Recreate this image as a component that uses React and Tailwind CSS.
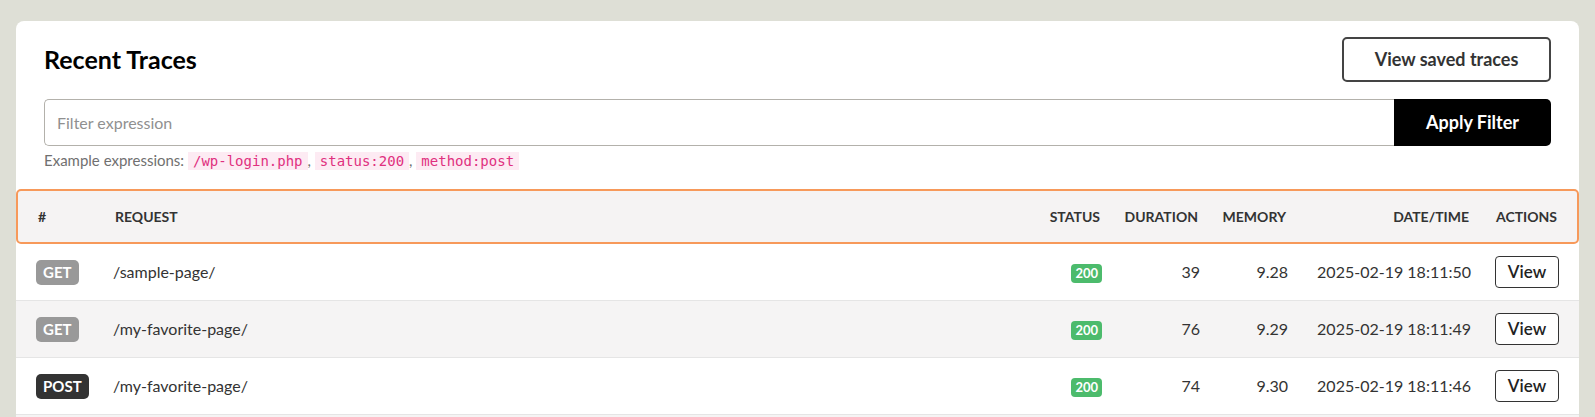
import React from "react";

const traces = [
  { method: "GET", path: "/sample-page/", status: 200, duration: 39, memory: "9.28", time: "2025-02-19 18:11:50" },
  { method: "GET", path: "/my-favorite-page/", status: 200, duration: 76, memory: "9.29", time: "2025-02-19 18:11:49" },
  { method: "POST", path: "/my-favorite-page/", status: 200, duration: 74, memory: "9.30", time: "2025-02-19 18:11:46" },
];

const cols = "grid grid-cols-[53px_1fr_51px_74px_64px_159px_64px] gap-x-6 items-center px-5";

const Code = ({ children }) => (
  <code className="bg-[#fdebf3] text-[#e0307f] px-[5px] py-[1px] text-[14px] font-['DejaVu_Sans_Mono',monospace]">
    {children}
  </code>
);

const App = () => {
  return (
    <div className="h-[417px] overflow-hidden bg-[#dedfd6] px-4 pt-[21px] font-['Lato',sans-serif] text-[#333]">
      <div className="bg-white rounded-lg overflow-hidden">
        <div className="px-7 pt-4 pb-[17px]">
          <div className="flex items-center justify-between">
            <h2 className="text-[25px] font-bold text-black">Recent Traces</h2>
            <button className="w-[209px] h-[45px] border-2 border-[#444] rounded-[5px] text-[18px] font-bold text-[#333]">
              View saved traces
            </button>
          </div>
          <div className="flex mt-[17px]">
            <input
              placeholder="Filter expression"
              className="flex-1 h-[47px] border border-[#b3b1ab] border-r-0 rounded-l-[5px] px-3 text-[16px] text-[#333] placeholder-[#909090] outline-none"
            />
            <button className="w-[157px] h-[47px] bg-black text-white rounded-r-[5px] text-[18px] font-bold">
              Apply Filter
            </button>
          </div>
          <p className="mt-[3px] text-[15px] text-[#707070]">
            Example expressions: <Code>/wp-login.php</Code>, <Code>status:200</Code>, <Code>method:post</Code>
          </p>
        </div>

        <div className={`${cols} h-[55px] bg-[#f5f3f3] border-2 border-[#f7995a] rounded-[5px] text-[14px] font-bold uppercase text-[#333]`}>
          <div>#</div>
          <div>Request</div>
          <div className="text-right">Status</div>
          <div className="text-right">Duration</div>
          <div className="text-right">Memory</div>
          <div className="text-right">Date/Time</div>
          <div className="text-right">Actions</div>
        </div>

        {traces.map((t, i) => (
          <div
            key={i}
            className={`${cols} h-[57px] border-b border-[#e5e5e5] text-[16px] ${i % 2 === 1 ? "bg-[#f5f4f4]" : "bg-white"}`}
          >
            <div>
              <span
                className={`inline-block h-[25px] leading-[25px] px-[7px] rounded-[5px] text-[15px] font-bold text-white ${
                  t.method === "POST" ? "bg-[#333]" : "bg-[#999]"
                }`}
              >
                {t.method}
              </span>
            </div>
            <div>{t.path}</div>
            <div className="text-right">
              <span className="inline-block h-[19px] leading-[19px] px-[4px] rounded-[4px] bg-[#4cbb6c] text-white text-[13px] font-bold">
                {t.status}
              </span>
            </div>
            <div className="text-right">{t.duration}</div>
            <div className="text-right">{t.memory}</div>
            <div className="text-right">{t.time}</div>
            <div className="text-right">
              <button className="w-[64px] h-[32px] border border-[#333] rounded-[4px] text-[17px] font-semibold text-[#222] bg-white">
                View
              </button>
            </div>
          </div>
        ))}
        <div className="h-[57px] bg-[#f5f4f4]" />
      </div>
    </div>
  );
};

export default App;
